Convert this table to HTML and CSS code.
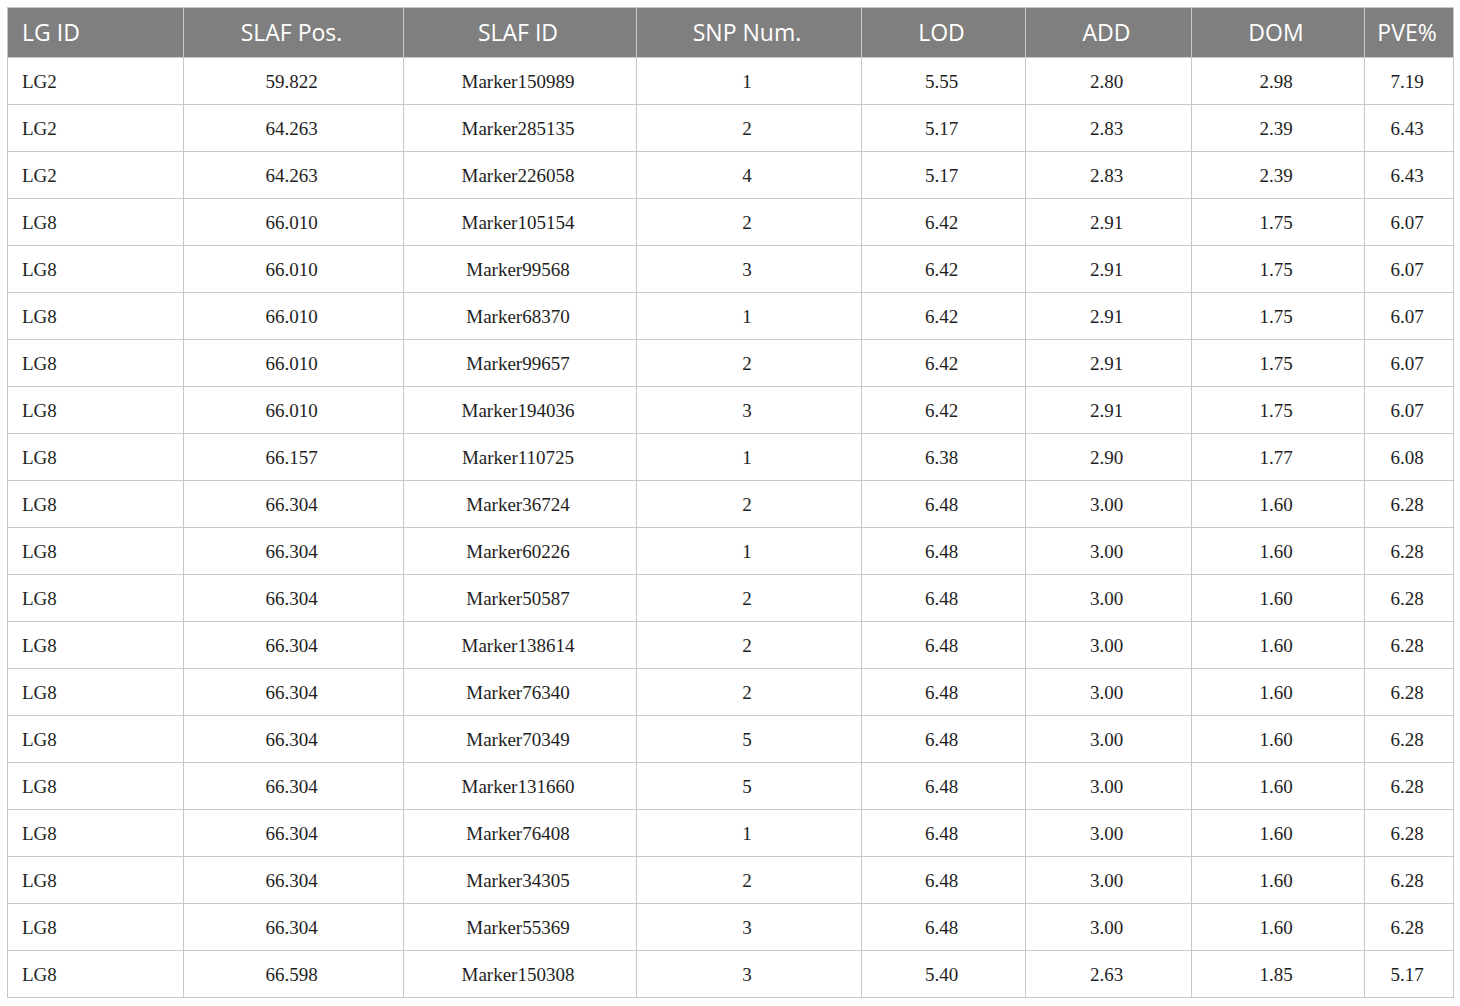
FILE: index.html
```html
<!DOCTYPE html>
<html>
<head>
<meta charset="utf-8">
<link rel="stylesheet" href="styles.css">
</head>
<body>
<table class="qtl">
<colgroup>
<col class="c1"><col class="c2"><col class="c3"><col class="c4"><col class="c5"><col class="c6"><col class="c7"><col class="c8">
</colgroup>
<thead>
<tr><th class="left">LG ID</th><th>SLAF Pos.</th><th>SLAF ID</th><th>SNP Num.</th><th>LOD</th><th>ADD</th><th>DOM</th><th>PVE%</th></tr>
</thead>
<tbody>
<tr><td class="left">LG2</td><td>59.822</td><td>Marker150989</td><td>1</td><td>5.55</td><td>2.80</td><td>2.98</td><td>7.19</td></tr>
<tr><td class="left">LG2</td><td>64.263</td><td>Marker285135</td><td>2</td><td>5.17</td><td>2.83</td><td>2.39</td><td>6.43</td></tr>
<tr><td class="left">LG2</td><td>64.263</td><td>Marker226058</td><td>4</td><td>5.17</td><td>2.83</td><td>2.39</td><td>6.43</td></tr>
<tr><td class="left">LG8</td><td>66.010</td><td>Marker105154</td><td>2</td><td>6.42</td><td>2.91</td><td>1.75</td><td>6.07</td></tr>
<tr><td class="left">LG8</td><td>66.010</td><td>Marker99568</td><td>3</td><td>6.42</td><td>2.91</td><td>1.75</td><td>6.07</td></tr>
<tr><td class="left">LG8</td><td>66.010</td><td>Marker68370</td><td>1</td><td>6.42</td><td>2.91</td><td>1.75</td><td>6.07</td></tr>
<tr><td class="left">LG8</td><td>66.010</td><td>Marker99657</td><td>2</td><td>6.42</td><td>2.91</td><td>1.75</td><td>6.07</td></tr>
<tr><td class="left">LG8</td><td>66.010</td><td>Marker194036</td><td>3</td><td>6.42</td><td>2.91</td><td>1.75</td><td>6.07</td></tr>
<tr><td class="left">LG8</td><td>66.157</td><td>Marker110725</td><td>1</td><td>6.38</td><td>2.90</td><td>1.77</td><td>6.08</td></tr>
<tr><td class="left">LG8</td><td>66.304</td><td>Marker36724</td><td>2</td><td>6.48</td><td>3.00</td><td>1.60</td><td>6.28</td></tr>
<tr><td class="left">LG8</td><td>66.304</td><td>Marker60226</td><td>1</td><td>6.48</td><td>3.00</td><td>1.60</td><td>6.28</td></tr>
<tr><td class="left">LG8</td><td>66.304</td><td>Marker50587</td><td>2</td><td>6.48</td><td>3.00</td><td>1.60</td><td>6.28</td></tr>
<tr><td class="left">LG8</td><td>66.304</td><td>Marker138614</td><td>2</td><td>6.48</td><td>3.00</td><td>1.60</td><td>6.28</td></tr>
<tr><td class="left">LG8</td><td>66.304</td><td>Marker76340</td><td>2</td><td>6.48</td><td>3.00</td><td>1.60</td><td>6.28</td></tr>
<tr><td class="left">LG8</td><td>66.304</td><td>Marker70349</td><td>5</td><td>6.48</td><td>3.00</td><td>1.60</td><td>6.28</td></tr>
<tr><td class="left">LG8</td><td>66.304</td><td>Marker131660</td><td>5</td><td>6.48</td><td>3.00</td><td>1.60</td><td>6.28</td></tr>
<tr><td class="left">LG8</td><td>66.304</td><td>Marker76408</td><td>1</td><td>6.48</td><td>3.00</td><td>1.60</td><td>6.28</td></tr>
<tr><td class="left">LG8</td><td>66.304</td><td>Marker34305</td><td>2</td><td>6.48</td><td>3.00</td><td>1.60</td><td>6.28</td></tr>
<tr><td class="left">LG8</td><td>66.304</td><td>Marker55369</td><td>3</td><td>6.48</td><td>3.00</td><td>1.60</td><td>6.28</td></tr>
<tr><td class="left">LG8</td><td>66.598</td><td>Marker150308</td><td>3</td><td>5.40</td><td>2.63</td><td>1.85</td><td>5.17</td></tr>
</tbody>
</table>
</body>
</html>
```
FILE: styles.css
```css
html, body {
  margin: 0;
  padding: 0;
  background: #ffffff;
}
body {
  padding: 7px 0 0 7px;
}
.qtl {
  border-collapse: collapse;
  table-layout: fixed;
  width: 1446px;
}
.c1 { width: 176px; }
.c2 { width: 220px; }
.c3 { width: 233px; }
.c4 { width: 225px; }
.c5 { width: 164px; }
.c6 { width: 166px; }
.c7 { width: 173px; }
.c8 { width: 89px; }
.qtl th {
  background: #7f7f7f;
  color: #ffffff;
  font-family: "Open Sans", "Noto Sans", sans-serif;
  font-weight: 400;
  font-size: 23px;
  height: 50px;
  padding: 0 8px 2px 4px;
  text-align: center;
  border: 1px solid #c8c8c8;
  box-sizing: border-box;
}
.qtl td {
  font-family: "Liberation Serif", serif;
  font-size: 19px;
  color: #1e1e1e;
  height: 47px;
  padding: 2px 8px 0 4px;
  text-align: center;
  border: 1px solid #c8c8c8;
  box-sizing: border-box;
}
.qtl th.left, .qtl td.left {
  text-align: left;
  padding-left: 14px;
}
```
